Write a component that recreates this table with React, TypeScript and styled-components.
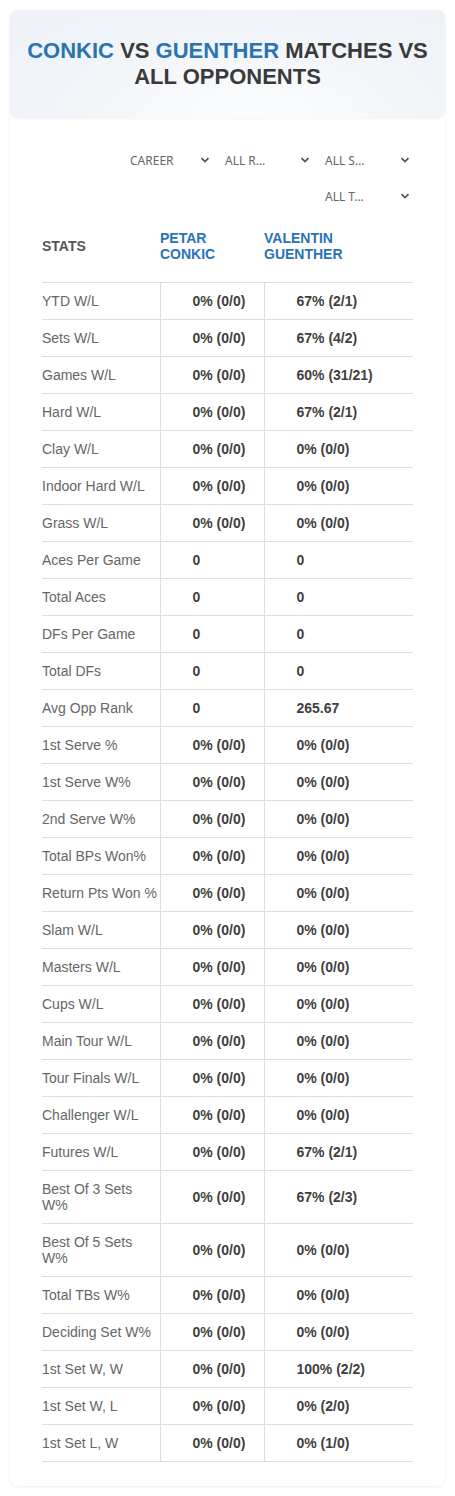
import styled, { createGlobalStyle } from 'styled-components'

const GlobalStyle = createGlobalStyle`
  body {
    margin: 0;
    background: #fff;
    font-family: 'Liberation Sans', Arial, Helvetica, sans-serif;
  }
`

const blue = '#2a73b5'
const sans = `'Liberation Sans', Arial, Helvetica, sans-serif`

const Page = styled.div`
  padding: 10px;
  font-family: ${sans};
`

const Card = styled.section`
  background: #fff;
  border-radius: 8px;
  box-shadow: 0 1px 3px rgba(0, 0, 0, 0.07);
  padding-bottom: 24px;
`

const Header = styled.header`
  height: 108px;
  display: flex;
  align-items: center;
  justify-content: center;
  border-radius: 8px;
  background: radial-gradient(ellipse at 55% 100%, #fbfcfd 0%, #f1f4f8 60%, #eef2f6 100%);
  box-shadow: 0 1px 2px rgba(0, 0, 0, 0.05);

  h1 {
    margin: 0;
    padding: 0 12px;
    text-align: center;
    font-family: ${sans};
    font-size: 22px;
    line-height: 26px;
    font-weight: 700;
    color: #3a3a3a;
    text-transform: uppercase;
  }
`

const Name = styled.span`
  color: ${blue};
`

const Body = styled.div`
  padding: 24px 32px 0;
`

const Filters = styled.div`
  display: flex;
  flex-wrap: wrap;
  justify-content: flex-end;
`

const Select = styled.div<{ $indent?: number }>`
  width: 100px;
  height: 36px;
  box-sizing: border-box;
  display: flex;
  align-items: center;
  justify-content: space-between;
  padding: 0 3px 0 ${p => p.$indent ?? 12}px;
  font-family: 'Noto Sans', sans-serif;
  font-size: 12px;
  color: #666;
  text-transform: uppercase;
`

const Chevron = () => (
  <svg width="10" height="10" viewBox="0 0 10 10">
    <path d="M1.5 3.2 L5 6.6 L8.5 3.2" fill="none" stroke="#555" strokeWidth="1.8" />
  </svg>
)

const Table = styled.table`
  width: 100%;
  border-collapse: collapse;
  table-layout: fixed;
  font-family: ${sans};
  font-size: 14px;
  line-height: 16px;
`

const Th = styled.th<{ $player?: boolean }>`
  text-align: left;
  vertical-align: middle;
  padding: 16px 0 20px;
  font-weight: 700;
  color: ${p => (p.$player ? blue : '#555')};
  border-bottom: 1px solid #dedede;
  text-transform: uppercase;
`

const Label = styled.td`
  padding: 10px 0 10px;
  color: #666;
  border-bottom: 1px solid #dedede;
  vertical-align: middle;
`

const Value = styled.td`
  padding: 10px 0 10px 32px;
  color: #3f3f3f;
  font-weight: 700;
  border-bottom: 1px solid #dedede;
  border-left: 1px solid #dedede;
  vertical-align: middle;
`

const rows: [string, string, string][] = [
  ['YTD W/L', '0% (0/0)', '67% (2/1)'],
  ['Sets W/L', '0% (0/0)', '67% (4/2)'],
  ['Games W/L', '0% (0/0)', '60% (31/21)'],
  ['Hard W/L', '0% (0/0)', '67% (2/1)'],
  ['Clay W/L', '0% (0/0)', '0% (0/0)'],
  ['Indoor Hard W/L', '0% (0/0)', '0% (0/0)'],
  ['Grass W/L', '0% (0/0)', '0% (0/0)'],
  ['Aces Per Game', '0', '0'],
  ['Total Aces', '0', '0'],
  ['DFs Per Game', '0', '0'],
  ['Total DFs', '0', '0'],
  ['Avg Opp Rank', '0', '265.67'],
  ['1st Serve %', '0% (0/0)', '0% (0/0)'],
  ['1st Serve W%', '0% (0/0)', '0% (0/0)'],
  ['2nd Serve W%', '0% (0/0)', '0% (0/0)'],
  ['Total BPs Won%', '0% (0/0)', '0% (0/0)'],
  ['Return Pts Won %', '0% (0/0)', '0% (0/0)'],
  ['Slam W/L', '0% (0/0)', '0% (0/0)'],
  ['Masters W/L', '0% (0/0)', '0% (0/0)'],
  ['Cups W/L', '0% (0/0)', '0% (0/0)'],
  ['Main Tour W/L', '0% (0/0)', '0% (0/0)'],
  ['Tour Finals W/L', '0% (0/0)', '0% (0/0)'],
  ['Challenger W/L', '0% (0/0)', '0% (0/0)'],
  ['Futures W/L', '0% (0/0)', '67% (2/1)'],
  ['Best Of 3 Sets W%', '0% (0/0)', '67% (2/3)'],
  ['Best Of 5 Sets W%', '0% (0/0)', '0% (0/0)'],
  ['Total TBs W%', '0% (0/0)', '0% (0/0)'],
  ['Deciding Set W%', '0% (0/0)', '0% (0/0)'],
  ['1st Set W, W', '0% (0/0)', '100% (2/2)'],
  ['1st Set W, L', '0% (0/0)', '0% (2/0)'],
  ['1st Set L, W', '0% (0/0)', '0% (1/0)'],
]

const filters = [
  { label: 'Career', indent: 17 },
  { label: 'All R…' },
  { label: 'All S…' },
  { label: 'All T…' },
]

export default function App() {
  return (
    <Page>
      <GlobalStyle />
      <Card>
        <Header>
          <h1>
            <Name>Conkic</Name> vs <Name>Guenther</Name> Matches vs All Opponents
          </h1>
        </Header>
        <Body>
          <Filters>
            {filters.map(f => (
              <Select key={f.label} $indent={f.indent}>
                {f.label}
                <Chevron />
              </Select>
            ))}
          </Filters>
          <Table>
            <colgroup>
              <col style={{ width: 118 }} />
              <col style={{ width: 104 }} />
              <col />
            </colgroup>
            <thead>
              <tr>
                <Th>Stats</Th>
                <Th $player>
                  Petar
                  <br />
                  Conkic
                </Th>
                <Th $player>
                  Valentin
                  <br />
                  Guenther
                </Th>
              </tr>
            </thead>
            <tbody>
              {rows.map(([label, a, b]) => (
                <tr key={label}>
                  <Label>{label}</Label>
                  <Value>{a}</Value>
                  <Value>{b}</Value>
                </tr>
              ))}
            </tbody>
          </Table>
        </Body>
      </Card>
    </Page>
  )
}
